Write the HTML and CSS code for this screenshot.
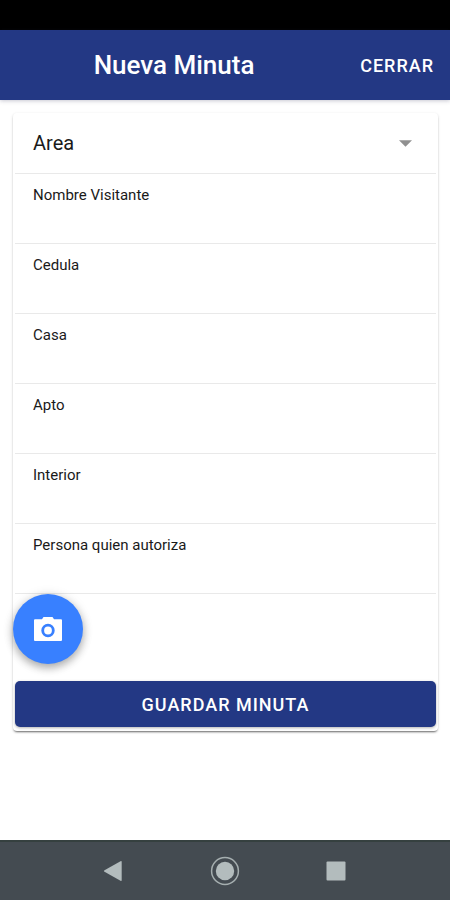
FILE: index.html
```html
<!DOCTYPE html>
<html lang="es">
<head>
<meta charset="utf-8">
<meta name="viewport" content="width=device-width, initial-scale=1">
<title>Nueva Minuta</title>
<link rel="stylesheet" href="styles.css">
</head>
<body>
<div class="status-bar"></div>
<header class="toolbar">
  <h1 class="toolbar-title">Nueva Minuta</h1>
  <button class="toolbar-close" type="button">CERRAR</button>
</header>
<main class="content">
  <form class="card">
    <div class="fields">
      <div class="field field-select">
        <label class="select-label" for="area">Area</label>
        <select class="select" id="area"><option value=""></option></select>
        <svg class="caret" viewBox="0 0 12 6" aria-hidden="true"><path d="M0 0h12L6 6z"/></svg>
      </div>
      <div class="field">
        <label class="label" for="nombre">Nombre Visitante</label>
        <input class="input" id="nombre" type="text">
      </div>
      <div class="field">
        <label class="label" for="cedula">Cedula</label>
        <input class="input" id="cedula" type="text">
      </div>
      <div class="field">
        <label class="label" for="casa">Casa</label>
        <input class="input" id="casa" type="text">
      </div>
      <div class="field">
        <label class="label" for="apto">Apto</label>
        <input class="input" id="apto" type="text">
      </div>
      <div class="field">
        <label class="label" for="interior">Interior</label>
        <input class="input" id="interior" type="text">
      </div>
      <div class="field">
        <label class="label" for="autoriza">Persona quien autoriza</label>
        <input class="input" id="autoriza" type="text">
      </div>
    </div>
    <button class="fab" type="button" aria-label="Tomar foto">
      <svg class="fab-icon" viewBox="0 0 28 24" aria-hidden="true">
        <path fill="#fff" d="M9.500 0h9l1.500 2.200H27a1 1 0 0 1 1 1V23a1 1 0 0 1-1 1H1a1 1 0 0 1-1-1V3.200a1 1 0 0 1 1-1h7z"/>
        <circle cx="14" cy="13.500" r="5.300" fill="#fff" stroke="#3880ff" stroke-width="2.800"/>
      </svg>
    </button>
    <button class="save" type="submit">GUARDAR MINUTA</button>
  </form>
</main>
<nav class="system-nav">
  <button class="nav-button" type="button" aria-label="Atrás">
    <svg class="nav-icon" viewBox="0 0 30 30"><path d="M5.500 14.200 21.500 5.200q1.200-.6 1.200.8v18q0 1.400-1.200.8L5.500 15.800q-1.300-.8 0-1.600z"/></svg>
  </button>
  <button class="nav-button" type="button" aria-label="Inicio">
    <svg class="nav-icon" viewBox="0 0 30 30"><circle cx="15" cy="15" r="9.200"/><circle class="ring" cx="15" cy="15" r="13.400"/></svg>
  </button>
  <button class="nav-button" type="button" aria-label="Recientes">
    <svg class="nav-icon" viewBox="0 0 30 30"><rect x="5.500" y="5.500" width="19" height="19" rx="1"/></svg>
  </button>
</nav>
</body>
</html>
```
FILE: styles.css
```css
* {
  box-sizing: border-box;
}

body {
  display: flex;
  flex-direction: column;
  min-height: 100vh;
  margin: 0;
  background: #fff;
  color: #1a1a1a;
  font-family: Roboto, "Liberation Sans", sans-serif;
}

button,
input,
select {
  margin: 0;
  padding: 0;
  border: 0;
  background: none;
  color: inherit;
  font: inherit;
}

.status-bar {
  height: 30px;
  background: #000;
}

.toolbar {
  display: grid;
  grid-template-columns: 1fr auto;
  gap: 12px;
  align-items: center;
  height: 70px;
  padding-right: 16px;
  background: #233884;
  color: #fff;
  box-shadow: 0 1px 4px rgba(40, 40, 80, 0.25);
}

.toolbar-title {
  margin: 0;
  text-align: center;
  font-size: 26px;
  font-weight: 500;
}

.toolbar-close {
  font-size: 18px;
  font-weight: 500;
  letter-spacing: 1px;
}

.content {
  flex: 1;
  padding: 13px 12px 16px 13px;
}

.card {
  display: flex;
  flex-direction: column;
  padding-bottom: 4px;
  border-radius: 4px;
  box-shadow: 0 2px 2px -1px rgba(0, 0, 0, 0.5), 0 1px 3px rgba(0, 0, 0, 0.16);
}

.fields {
  padding: 0 2px;
}

.field {
  display: flex;
  flex-direction: column;
  height: 70px;
  padding: 12px 18px 0;
  border-bottom: 1px solid #e9e9e9;
}

.field-select {
  flex-direction: row;
  align-items: center;
  height: 61px;
  padding: 0 24px 0 18px;
}

.select-label {
  font-size: 20px;
}

.select {
  flex: 1;
  height: 40px;
  appearance: none;
}

.caret {
  width: 13px;
  height: 7px;
  fill: #909090;
}

.label {
  font-size: 15px;
  line-height: 18px;
}

.input {
  flex: 1;
  width: 100%;
  outline: 0;
}

.fab {
  display: flex;
  align-items: center;
  justify-content: center;
  width: 70px;
  height: 70px;
  border-radius: 50%;
  background: #3880ff;
  box-shadow: 0 4px 8px rgba(0, 0, 0, 0.28), 0 1px 12px rgba(0, 0, 0, 0.12);
}

.fab-icon {
  width: 28px;
  height: 24px;
}

.save {
  height: 46px;
  margin: 17px 2px 0;
  border-radius: 5px;
  background: #233884;
  color: #fff;
  font-size: 18px;
  font-weight: 500;
  letter-spacing: 1px;
  box-shadow: 0 1px 3px rgba(0, 0, 0, 0.3);
}

.system-nav {
  display: flex;
  align-items: center;
  justify-content: center;
  gap: 81px;
  height: 60px;
  border-top: 2px solid #35403f;
  background: #444b51;
}

.nav-button {
  display: flex;
}

.nav-icon {
  width: 30px;
  height: 30px;
  fill: #b3bcbd;
}

.nav-icon .ring {
  fill: none;
  stroke: #a5aeaf;
  stroke-width: 1.5;
}
```
